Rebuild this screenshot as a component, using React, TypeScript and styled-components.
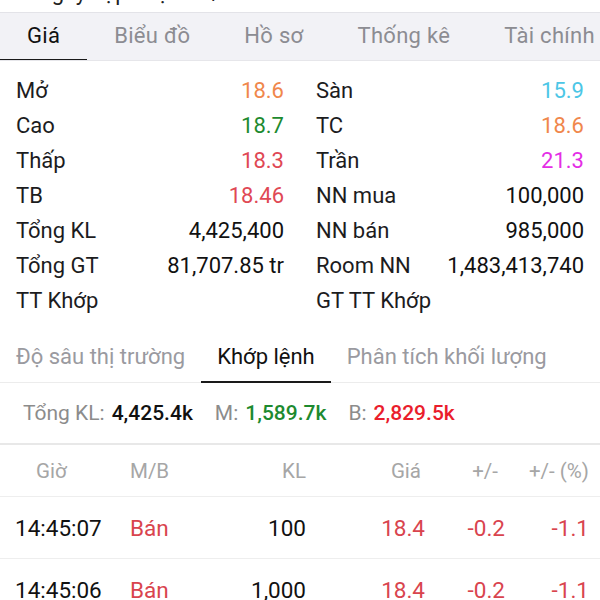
import styled, { createGlobalStyle } from 'styled-components';

const GlobalStyle = createGlobalStyle`
    html, body {
        margin: 0;
        padding: 0;
        overflow: hidden;
        background: #ffffff;
        font-family: Roboto, "Noto Sans", sans-serif;
        color: #1c1c1e;
    }
`

interface InfoItem {
    label: string
    value?: string
    color?: string
}

interface Trade {
    time: string
    side: string
    volume: string
    price: string
    change: string
    percent: string
}

const mainTabs = ['Giá', 'Biểu đồ', 'Hồ sơ', 'Thống kê', 'Tài chính'];
const subTabs = ['Độ sâu thị trường', 'Khớp lệnh', 'Phân tích khối lượng'];

const leftInfo: InfoItem[] = [
    { label: 'Mở', value: '18.6', color: '#f0874c' },
    { label: 'Cao', value: '18.7', color: '#1d8a2f' },
    { label: 'Thấp', value: '18.3', color: '#e04854' },
    { label: 'TB', value: '18.46', color: '#e04854' },
    { label: 'Tổng KL', value: '4,425,400' },
    { label: 'Tổng GT', value: '81,707.85 tr' },
    { label: 'TT Khớp' },
];

const rightInfo: InfoItem[] = [
    { label: 'Sàn', value: '15.9', color: '#4cc6e6' },
    { label: 'TC', value: '18.6', color: '#f0874c' },
    { label: 'Trần', value: '21.3', color: '#e42ee6' },
    { label: 'NN mua', value: '100,000' },
    { label: 'NN bán', value: '985,000' },
    { label: 'Room NN', value: '1,483,413,740' },
    { label: 'GT TT Khớp' },
];

// header alignment differs a little from the values below it
const columns = [
    { title: 'Giờ', align: 'left', headPad: '0 0 0 21px' },
    { title: 'M/B', align: 'left', headPad: '0' },
    { title: 'KL', align: 'right', headPad: '0' },
    { title: 'Giá', align: 'right', headPad: '0 4px 0 0' },
    { title: '+/-', align: 'right', headPad: '0 7px 0 0' },
    { title: '+/- (%)', align: 'right', headPad: '0' },
];

const trades: Trade[] = [
    { time: '14:45:07', side: 'Bán', volume: '100', price: '18.4', change: '-0.2', percent: '-1.1' },
    { time: '14:45:06', side: 'Bán', volume: '1,000', price: '18.4', change: '-0.2', percent: '-1.1' },
];

const App = () => {
    return (
        <Page>
            <GlobalStyle />
            <Clipped>
                <ClippedText>Ngày cập nhật: 15/08</ClippedText>
            </Clipped>
            <TabBar>
                {mainTabs.map((t, i) => (
                    <MainTab key={t} active={i === 0}>{t}</MainTab>
                ))}
            </TabBar>
            <InfoGrid>
                {[leftInfo, rightInfo].map((col, c) => (
                    <InfoColumn key={c}>
                        {col.map(item => (
                            <InfoRow key={item.label}>
                                <span>{item.label}</span>
                                <InfoValue color={item.color}>{item.value}</InfoValue>
                            </InfoRow>
                        ))}
                    </InfoColumn>
                ))}
            </InfoGrid>
            <SubTabBar>
                {subTabs.map((t, i) => (
                    <SubTab key={t} active={i === 1}>{t}</SubTab>
                ))}
            </SubTabBar>
            <Summary>
                <SumLabel>Tổng KL:</SumLabel>
                <SumValue>4,425.4k</SumValue>
                <SumLabel>M:</SumLabel>
                <SumValue color='#1d8a2f'>1,589.7k</SumValue>
                <SumLabel>B:</SumLabel>
                <SumValue color='#ea1d2c'>2,829.5k</SumValue>
            </Summary>
            <TableHead>
                {columns.map(col => (
                    <HeadCell key={col.title} align={col.align} pad={col.headPad}>{col.title}</HeadCell>
                ))}
            </TableHead>
            {trades.map(tr => (
                <TradeRow key={tr.time}>
                    <Cell align='left'>{tr.time}</Cell>
                    <Cell align='left' color='#d9444e'>{tr.side}</Cell>
                    <Cell align='right'>{tr.volume}</Cell>
                    <Cell align='right' color='#d9444e'>{tr.price}</Cell>
                    <Cell align='right' color='#d9444e'>{tr.change}</Cell>
                    <Cell align='right' color='#d9444e'>{tr.percent}</Cell>
                </TradeRow>
            ))}
        </Page>
    );
}

const Page = styled.div`
    width: 600px;
    height: 600px;
    overflow: hidden;
    background: #ffffff;
`

const Clipped = styled.div`
    height: 12px;
    overflow: hidden;
`

const ClippedText = styled.div`
    margin-top: -21px;
    padding-left: 36px;
    font-size: 22px;
    line-height: 28px;
    color: #222;
`

const TabBar = styled.div`
    display: flex;
    height: 47px;
    background: #f2f2f6;
    border-top: 1px solid #e3e3e8;
    border-bottom: 1px solid #e6e6ea;
    overflow: hidden;
`

const MainTab = styled.div<{ active?: boolean }>`
    flex: 0 0 auto;
    padding: 0 27px;
    font-size: 22px;
    letter-spacing: 0.3px;
    line-height: 46px;
    white-space: nowrap;
    color: ${({ active }) => active ? '#111' : '#8c8c92'};
    border-bottom: 3px solid ${({ active }) => active ? '#1a1a1a' : 'transparent'};
    margin-bottom: -2px;
`

const InfoGrid = styled.div`
    display: grid;
    grid-template-columns: 1fr 1fr;
    padding: 12px 0 13px;
`

const InfoColumn = styled.div`
    padding: 0 16px;
`

const InfoRow = styled.div`
    display: flex;
    justify-content: space-between;
    height: 35px;
    align-items: center;
    font-size: 22px;
    color: #1c1c1e;
    white-space: nowrap;
`

const InfoValue = styled.span<{ color?: string }>`
    color: ${({ color }) => color || '#111'};
`

const SubTabBar = styled.div`
    display: flex;
    border-bottom: 1px solid #ececec;
`

const SubTab = styled.div<{ active?: boolean }>`
    padding: 12px 16px 11px;
    font-size: 22px;
    line-height: 27px;
    white-space: nowrap;
    color: ${({ active }) => active ? '#111' : '#9a9aa0'};
    border-bottom: 2px solid ${({ active }) => active ? '#1a1a1a' : 'transparent'};
    margin-bottom: -1px;
`

const Summary = styled.div`
    display: flex;
    align-items: center;
    height: 60px;
    padding-left: 23px;
    font-size: 21px;
    border-bottom: 2px solid #e8e8e8;
`

const SumLabel = styled.span`
    color: #8c8c8c;
    margin-right: 7px;
`

const SumValue = styled.span<{ color?: string }>`
    color: ${({ color }) => color || '#111'};
    font-weight: 500;
    margin-right: 22px;
`

const rowColumns = '115px 60px 116px 119px 80px 1fr';

const TableHead = styled.div`
    display: grid;
    grid-template-columns: ${rowColumns};
    align-items: center;
    height: 51px;
    padding: 0 11px 0 15px;
    font-size: 20.5px;
    color: #a6a6a6;
    border-bottom: 1px solid #eeeeee;
`

const HeadCell = styled.div<{ align: string; pad: string }>`
    text-align: ${({ align }) => align};
    padding: ${({ pad }) => pad};
    white-space: nowrap;
`

const TradeRow = styled.div`
    display: grid;
    grid-template-columns: ${rowColumns};
    align-items: center;
    height: 61px;
    padding: 0 11px 0 15px;
    font-size: 22.5px;
    color: #111;
    border-bottom: 1px solid #eeeeee;
`

const Cell = styled.div<{ align: string; color?: string }>`
    text-align: ${({ align }) => align};
    color: ${({ color }) => color || '#111'};
    white-space: nowrap;
`

export default App;
